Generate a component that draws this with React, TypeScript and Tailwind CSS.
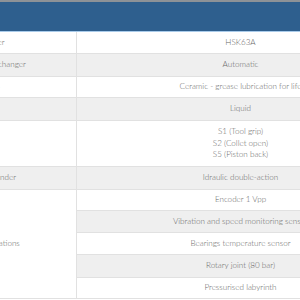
const rows = [
  { label: "Tool holder", value: ["HSK63A"], h: "h-[22px]", gray: false },
  { label: "Automatic tool changer", value: ["Automatic"], h: "h-[23px]", gray: true },
  { label: "Bearings", value: ["Ceramic - grease lubrication for life"], h: "h-[21px]", gray: false },
  { label: "Cooling", value: ["Liquid"], h: "h-[23px]", gray: true },
  { label: "Sensors", value: ["S1 (Tool grip)", "S2 (Collet open)", "S5 (Piston back)"], h: "h-[46px]", gray: false },
  { label: "Clamping cylinder", value: ["Idraulic double-action"], h: "h-[23px]", gray: true },
];

const options = [
  { value: "Encoder 1 Vpp", h: "h-[21px]", gray: false },
  { value: "Vibration and speed monitoring sensor", h: "h-[22px]", gray: true },
  { value: "Bearings temperature sensor", h: "h-[22px]", gray: false },
  { value: "Rotary joint (80 bar)", h: "h-[23px]", gray: true },
  { value: "Pressurised labyrinth", h: "h-[21px]", gray: false },
];

export default function App() {
  return (
    <div className="w-[300px] h-[300px] overflow-hidden bg-white font-['Lato',sans-serif] font-light text-[8.1px] leading-[11.5px] text-[#666666]">
      <div className="-ml-[106px] w-[510px] flex flex-col">
        <div className="h-[32px] border-t-2 border-t-[#8d9297] bg-[#2e5f8e] border-b border-b-[#a9cbea]" />
        {rows.map((r) => (
          <div key={r.label} className={`flex border-b border-[#e1e1e1] ${r.h} ${r.gray ? "bg-[#efefef]" : "bg-white"}`}>
            <div className="w-[183px] shrink-0 border-r border-[#e1e1e1] flex items-center justify-center">
              {r.label}
            </div>
            <div className="flex-1 flex flex-col items-center justify-center whitespace-nowrap">
              {r.value.map((v) => (
                <span key={v}>{v}</span>
              ))}
            </div>
          </div>
        ))}
        <div className="flex">
          <div className="w-[183px] shrink-0 border-r border-b border-[#e1e1e1] flex items-center justify-center">
            Other specifications
          </div>
          <div className="flex-1 flex flex-col">
            {options.map((o) => (
              <div key={o.value} className={`flex items-center justify-center whitespace-nowrap border-b border-[#e1e1e1] ${o.h} ${o.gray ? "bg-[#efefef]" : "bg-white"}`}>
                {o.value}
              </div>
            ))}
          </div>
        </div>
      </div>
    </div>
  );
}
